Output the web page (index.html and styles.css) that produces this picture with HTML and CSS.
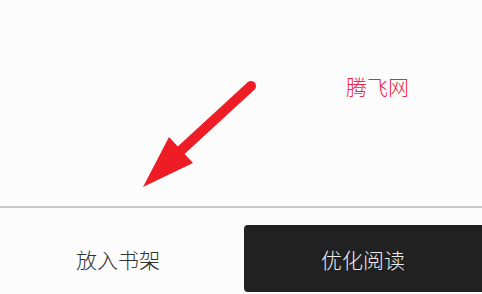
FILE: index.html
```html
<!DOCTYPE html>
<html lang="zh-CN">
<head>
<meta charset="utf-8">
<title>阅读</title>
<link rel="stylesheet" href="styles.css">
</head>
<body>
<div class="page">
  <div class="content">
    <svg class="arrow" width="482" height="206" viewBox="0 0 482 206" xmlns="http://www.w3.org/2000/svg">
      <line x1="251" y1="86" x2="176" y2="155" stroke="#ee1d25" stroke-width="10" stroke-linecap="round"/>
      <polygon points="143,187 169,137 193,163" fill="#ee1d25"/>
    </svg>
    <span class="watermark">腾飞网</span>
  </div>
  <div class="bar">
    <button class="btn btn-light">放入书架</button>
    <button class="btn btn-dark">优化阅读</button>
  </div>
</div>
</body>
</html>
```

FILE: styles.css
```css
html, body {
  margin: 0;
  padding: 0;
  background: #fcfcfc;
}
.page {
  width: 482px;
  height: 294px;
  overflow: hidden;
  font-family: "Noto Sans CJK SC", "Noto Sans", sans-serif;
}
.content {
  position: relative;
  height: 206px;
  border-bottom: 2px solid #cac8c4;
}
.arrow {
  position: absolute;
  left: 0;
  top: 0;
}
.watermark {
  position: absolute;
  left: 346px;
  top: 72px;
  font-size: 21px;
  line-height: 28px;
  color: #ec2442;
  font-weight: 300;
}
.bar {
  display: flex;
  gap: 8px;
  padding-top: 17px;
}
.btn {
  height: 67px;
  border: none;
  font-family: inherit;
  font-size: 21px;
  font-weight: 300;
  padding: 0;
  margin: 0;
}
.btn-light {
  width: 236px;
  background: transparent;
  color: #333333;
}
.btn-dark {
  flex: 1;
  background: #212121;
  color: #ececec;
  border-radius: 4px 0 0 4px;
}
```
